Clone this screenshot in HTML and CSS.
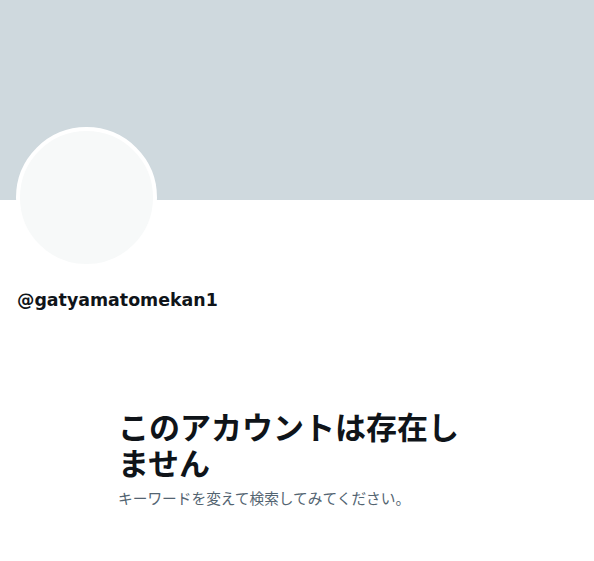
FILE: index.html
```html
<!DOCTYPE html>
<html lang="ja">
<head>
    <meta charset="UTF-8">
    <meta name="viewport" content="width=device-width, initial-scale=1.0">
    <title>@gatyamatomekan1</title>
    <link rel="stylesheet" href="styles.css">
</head>
<body>
    <div class="banner"></div>

    <div class="profile">
        <div class="avatar"></div>
        <p class="handle">@gatyamatomekan1</p>
    </div>

    <!-- empty state -->
    <div class="empty">
        <h2>このアカウントは存在しません</h2>
        <p>キーワードを変えて検索してみてください。</p>
    </div>
</body>
</html>
```

FILE: styles.css
```css
body {
    margin: 0;
    background: #ffffff;
    font-family: "DejaVu Sans", "Noto Sans CJK JP", sans-serif;
    color: #0f1419;
}
.banner {
    height: 200px;
    background: #cfd9de;
}
.profile {
    padding: 0 16px;
}
.avatar {
    width: 133px;
    height: 133px;
    margin-top: -73px;
    border: 4px solid #ffffff;
    border-radius: 50%;
    background: #f7f9f9;
}
.handle {
    margin: 20px 0 0 1px;
    font-size: 17.4px;
    font-weight: 700;
    line-height: 24px;
}
.empty {
    width: 358px;
    margin: 96px auto 0;
}
.empty h2 {
    margin: 0;
    font-family: "Noto Sans CJK JP", sans-serif;
    font-size: 31px;
    font-weight: 700;
    line-height: 36px;
}
.empty p {
    margin: 8px 0 0;
    font-family: "Noto Sans CJK JP", sans-serif;
    font-size: 14.7px;
    color: #536471;
    line-height: 20px;
}
```
